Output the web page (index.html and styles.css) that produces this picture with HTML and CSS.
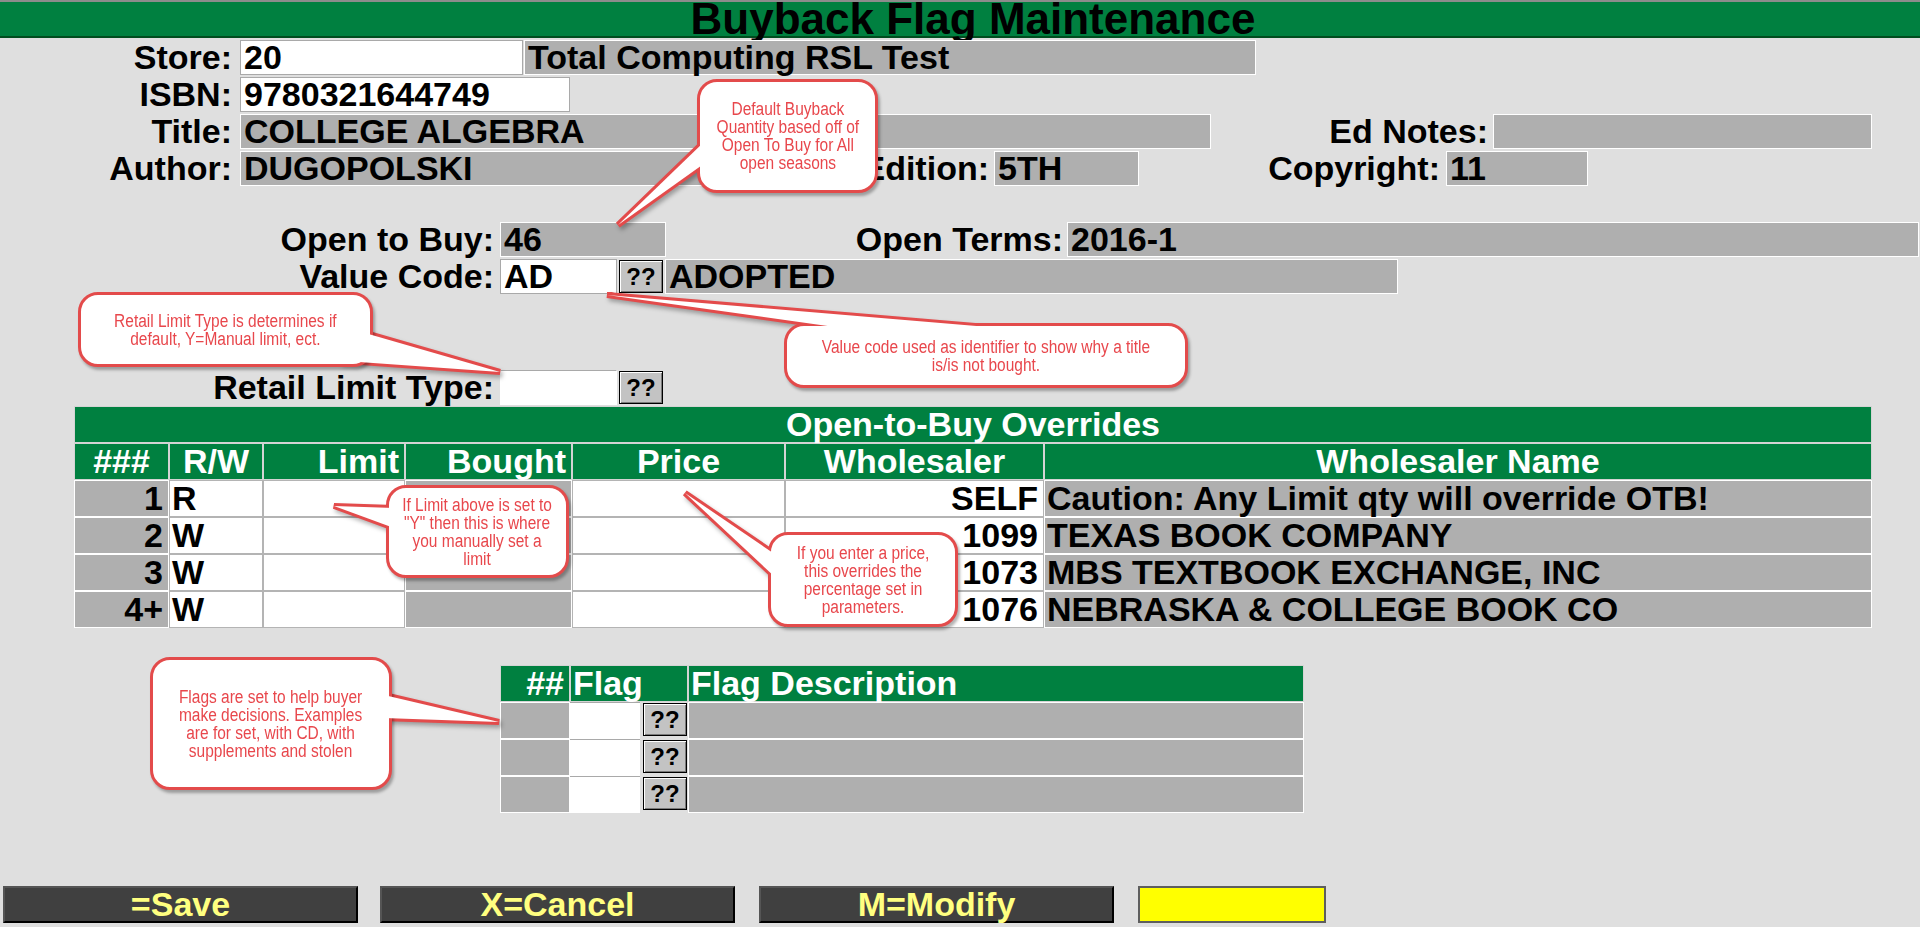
FILE: index.html
```html
<!DOCTYPE html>
<html>
<head>
<meta charset="utf-8">
<title>Buyback Flag Maintenance</title>
<link rel="stylesheet" href="styles.css">
</head>
<body>
<div class="screen">
  <header class="titlebar">Buyback Flag Maintenance</header>

  <section class="info">
    <div class="row">
      <span class="lbl w-lbl">Store:</span>
      <span class="fld fld-w w-store">20</span>
      <span class="fld fld-g w-storename">Total Computing RSL Test</span>
    </div>
    <div class="row">
      <span class="lbl w-lbl">ISBN:</span>
      <span class="fld fld-w w-isbn">9780321644749</span>
    </div>
    <div class="row">
      <span class="lbl w-lbl">Title:</span>
      <span class="fld fld-g w-title">COLLEGE ALGEBRA</span>
      <span class="lbl w-ednotes-l">Ed Notes:</span>
      <span class="fld fld-g w-ednotes">&nbsp;</span>
    </div>
    <div class="row">
      <span class="lbl w-lbl">Author:</span>
      <span class="fld fld-g w-author">DUGOPOLSKI</span>
      <span class="lbl w-edition-l">Edition:</span>
      <span class="fld fld-g w-edition">5TH</span>
      <span class="lbl w-copy-l">Copyright:</span>
      <span class="fld fld-g w-copy">11</span>
    </div>
  </section>

  <section class="buy">
    <div class="row">
      <span class="lbl w-lbl2">Open to Buy:</span>
      <span class="fld fld-g w-otb">46</span>
      <span class="lbl w-terms-l">Open Terms:</span>
      <span class="fld fld-g w-terms">2016-1</span>
    </div>
    <div class="row">
      <span class="lbl w-lbl2">Value Code:</span>
      <span class="fld fld-w w-code">AD</span>
      <span class="qbtn qbtn-row">??</span>
      <span class="fld fld-g w-codedesc">ADOPTED</span>
    </div>
    <div class="row row-retail">
      <span class="lbl w-lbl2">Retail Limit Type:</span>
      <span class="fld fld-w fld-top w-code">&nbsp;</span>
      <span class="qbtn qbtn-row">??</span>
    </div>
  </section>

  <section class="ovr">
    <div class="c c-h ac ovr-title">Open-to-Buy Overrides</div>
    <div class="c c-h ac">###</div>
    <div class="c c-h ac">R/W</div>
    <div class="c c-h ar">Limit</div>
    <div class="c c-h ar">Bought</div>
    <div class="c c-h ac">Price</div>
    <div class="c c-h ac">Wholesaler</div>
    <div class="c c-h ac">Wholesaler Name</div>

    <div class="c c-g ar">1</div>
    <div class="c c-w al">R</div>
    <div class="c c-w"></div>
    <div class="c c-g"></div>
    <div class="c c-w"></div>
    <div class="c c-w ar">SELF</div>
    <div class="c c-g al">Caution: Any Limit qty will override OTB!</div>

    <div class="c c-g ar">2</div>
    <div class="c c-w al">W</div>
    <div class="c c-w"></div>
    <div class="c c-g"></div>
    <div class="c c-w"></div>
    <div class="c c-w ar">1099</div>
    <div class="c c-g al">TEXAS BOOK COMPANY</div>

    <div class="c c-g ar">3</div>
    <div class="c c-w al">W</div>
    <div class="c c-w"></div>
    <div class="c c-g"></div>
    <div class="c c-w"></div>
    <div class="c c-w ar">1073</div>
    <div class="c c-g al">MBS TEXTBOOK EXCHANGE, INC</div>

    <div class="c c-g ar">4+</div>
    <div class="c c-w al">W</div>
    <div class="c c-w"></div>
    <div class="c c-g"></div>
    <div class="c c-w"></div>
    <div class="c c-w ar">1076</div>
    <div class="c c-g al">NEBRASKA &amp; COLLEGE BOOK CO</div>
  </section>

  <section class="flags">
    <div class="c c-h ar">##</div>
    <div class="c c-h al">Flag</div>
    <div class="c c-h al">Flag Description</div>

    <div class="c c-g"></div>
    <div class="flagcell"><span class="fin"></span><span class="qbtn">??</span></div>
    <div class="c c-g"></div>

    <div class="c c-g"></div>
    <div class="flagcell"><span class="fin"></span><span class="qbtn">??</span></div>
    <div class="c c-g"></div>

    <div class="c c-g"></div>
    <div class="flagcell"><span class="fin"></span><span class="qbtn">??</span></div>
    <div class="c c-g"></div>
  </section>

  <footer class="actions">
    <div class="abtn">=Save</div>
    <div class="abtn">X=Cancel</div>
    <div class="abtn">M=Modify</div>
    <div class="ybox"></div>
  </footer>

  <svg class="tails tails-under" width="1920" height="927" viewBox="0 0 1920 927">
    <polygon points="705,141 618,225 705,163"/>
    <polygon points="365,333 500,372 345,361"/>
    <polygon points="863,331 607,295 1035,331"/>
    <polygon points="394,508 334,506 394,528"/>
    <polygon points="776,555 685,493 776,578"/>
    <polygon points="384,695 499,722 384,718"/>
  </svg>

  <div class="callout co1"><span class="ct">Default Buyback<br>Quantity based off of<br>Open To Buy for All<br>open seasons</span></div>
  <div class="callout co2"><span class="ct">Retail Limit Type is determines if<br>default, Y=Manual limit, ect.</span></div>
  <div class="callout co3"><span class="ct">Value code used as identifier to show why a title<br>is/is not bought.</span></div>
  <div class="callout co4"><span class="ct">If Limit above is set to<br>"Y" then this is where<br>you manually set a<br>limit</span></div>
  <div class="callout co5"><span class="ct">If you enter a price,<br>this overrides the<br>percentage set in<br>parameters.</span></div>
  <div class="callout co6"><span class="ct">Flags are set to help buyer<br>make decisions. Examples<br>are for set, with CD, with<br>supplements and stolen</span></div>

  <svg class="tails tails-over" width="1920" height="927" viewBox="0 0 1920 927">
    <polygon points="705,141 618,225 705,163"/>
    <polygon points="365,333 500,372 345,361"/>
    <polygon points="863,331 607,295 1035,331"/>
    <polygon points="394,508 334,506 394,528"/>
    <polygon points="776,555 685,493 776,578"/>
    <polygon points="384,695 499,722 384,718"/>
  </svg>
</div>
</body>
</html>
```

FILE: styles.css
```css
html, body {
  margin: 0;
  padding: 0;
  background: #dfdfdf;
}

body {
  font-family: "Liberation Sans", Arial, sans-serif;
  font-weight: bold;
  font-size: 34px;
  color: #000;
}

.screen {
  position: relative;
  width: 1920px;
  height: 927px;
  overflow: hidden;
  background: #dfdfdf;
}

/* Title bar */
.titlebar {
  height: 34px;
  border-top: 2px solid #8c8c8c;
  border-bottom: 2px solid #004d1f;
  background: #008040;
  padding-left: 26px;
  text-align: center;
  font-size: 44px;
  line-height: 34px;
  white-space: nowrap;
}

/* Form rows */
.row {
  display: flex;
  height: 35px;
  margin-top: 2px;
  line-height: 33px;
}

.buy {
  margin-top: 36px;
}

.row-retail {
  margin-top: 76px;
}

.lbl {
  flex: none;
  text-align: right;
  white-space: nowrap;
  line-height: 35px;
}

.fld {
  flex: none;
  box-sizing: border-box;
  height: 35px;
  padding-left: 3px;
  white-space: nowrap;
}

.fld-w {
  background: #fff;
  border: 1px solid #a9a9a9;
}

.fld-g {
  background: #afafaf;
  border: 1px solid #fff;
}

.fld-top {
  border-color: #a9a9a9 #fff #fff #fff;
}

.w-lbl { width: 232px; margin-right: 8px; }
.w-store { width: 283px; }
.w-storename { width: 732px; margin-left: 1px; }
.w-isbn { width: 330px; }
.w-title { width: 971px; }
.w-ednotes-l { width: 277px; margin-right: 5px; }
.w-ednotes { width: 379px; }
.w-author { width: 615px; }
.w-edition-l { width: 134px; margin-right: 5px; }
.w-edition { width: 145px; }
.w-copy-l { width: 301px; margin-right: 6px; }
.w-copy { width: 142px; }

.w-lbl2 { width: 494px; margin-right: 6px; }
.w-otb { width: 166px; }
.w-terms-l { width: 397px; margin-right: 4px; }
.w-terms { width: 852px; }
.w-code { width: 117px; }
.w-codedesc { width: 733px; margin-left: 2px; }

/* ?? buttons */
.qbtn {
  flex: none;
  display: block;
  box-sizing: border-box;
  width: 44px;
  height: 33px;
  margin-top: 1px;
  border: 1px solid #000;
  background: #c3c3c3;
  box-shadow: inset 1px 1px 0 #fff, inset -1px -1px 0 #7a7a7a;
  font-size: 24px;
  line-height: 31px;
  text-align: center;
  color: #000;
}

.qbtn-row {
  margin-left: 2px;
}

/* Tables */
.ovr {
  display: grid;
  grid-template-columns: 95px 94px 142px 167px 213px 259px 828px;
  grid-auto-rows: 37px;
  width: 1798px;
  margin-left: 74px;
  margin-top: 1px;
}

.ovr-title {
  grid-column: 1 / -1;
}

.flags {
  display: grid;
  grid-template-columns: 70px 118px 616px;
  grid-auto-rows: 37px;
  width: 804px;
  margin-left: 500px;
  margin-top: 37px;
}

.c {
  box-sizing: border-box;
  padding: 0 4px;
  line-height: 35px;
  white-space: nowrap;
}

.c-h {
  background: #008040;
  color: #fff;
  border: 1px solid #d4d4d4;
}

.c-g {
  background: #afafaf;
  border: 1px solid #fff;
}

.c-w {
  background: #fff;
  border: 1px solid #b4b4b4;
}

.ar { text-align: right; padding-right: 5px; }
.ac { text-align: center; }
.al { text-align: left; padding-left: 2px; }

.flagcell {
  display: flex;
  background: #dfdfdf;
}

.fin {
  display: block;
  box-sizing: border-box;
  width: 70px;
  height: 37px;
  background: #fff;
  border-top: 1px solid #a9a9a9;
}

.flagcell .qbtn {
  margin-left: 3px;
  margin-top: 1px;
}

/* Bottom action bar */
.actions {
  display: flex;
  margin-top: 73px;
  padding-left: 3px;
}

.abtn {
  box-sizing: border-box;
  width: 355px;
  height: 37px;
  margin-right: 22px;
  background: #404040;
  border: 2px solid #000;
  border-top-color: #555;
  border-left-color: #555;
  color: #ffff80;
  text-align: center;
  line-height: 33px;
  white-space: nowrap;
}

.abtn + .abtn {
  margin-right: 24px;
}

.ybox {
  box-sizing: border-box;
  width: 188px;
  height: 37px;
  background: #ffff00;
  border: 2px solid #5e5e5e;
}

/* Callouts */
.tails {
  position: absolute;
  left: 0;
  top: 0;
  pointer-events: none;
}

.tails-under {
  z-index: 10;
  filter: drop-shadow(2px 3px 2px rgba(0, 0, 0, 0.3));
}

.tails-under polygon {
  fill: #fff;
  stroke: #e34b4b;
  stroke-width: 6;
  stroke-linejoin: miter;
}

.tails-over {
  z-index: 12;
}

.tails-over polygon {
  fill: #fff;
  stroke: none;
}

.callout {
  position: absolute;
  z-index: 11;
  box-sizing: border-box;
  display: flex;
  align-items: center;
  justify-content: center;
  text-align: center;
  background: #fff;
  border: 3px solid #e34b4b;
  border-radius: 20px;
  box-shadow: 2px 3px 3px rgba(0, 0, 0, 0.3);
  font-family: "Liberation Sans", Arial, sans-serif;
  font-weight: normal;
  font-size: 18px;
  line-height: 18px;
  color: #e8474c;
}

.ct {
  display: inline-block;
  white-space: nowrap;
  transform: scaleX(0.86);
}

.co1 { left: 697px; top: 79px; width: 181px; height: 114px; }
.co2 { left: 78px; top: 292px; width: 295px; height: 75px; }
.co3 { left: 784px; top: 323px; width: 404px; height: 65px; }
.co4 { left: 386px; top: 485px; width: 183px; height: 93px; }
.co5 { left: 768px; top: 532px; width: 190px; height: 95px; }
.co6 { left: 150px; top: 657px; width: 242px; height: 133px; }
```
